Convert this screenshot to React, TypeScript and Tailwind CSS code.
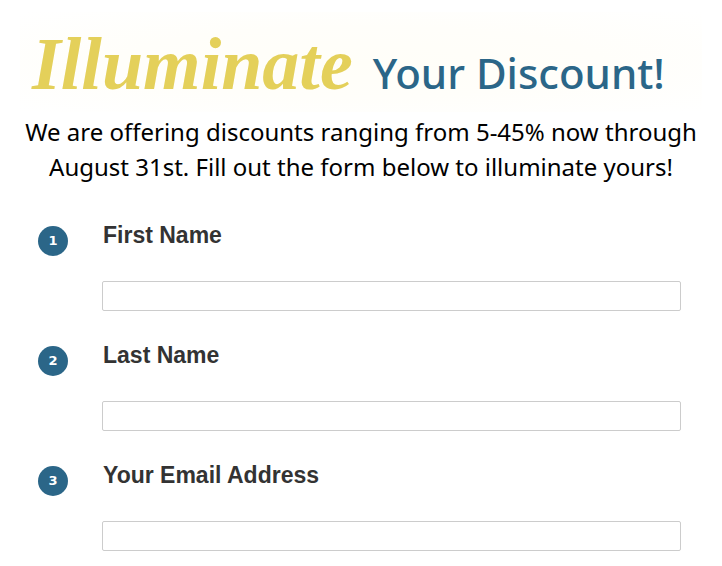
const questions = [
  { id: 'first-name', label: 'First Name', type: 'text' },
  { id: 'last-name', label: 'Last Name', type: 'text' },
  { id: 'email', label: 'Your Email Address', type: 'email' },
]

function Header() {
  return (
    <header className="px-5 pt-3">
      <h1 className="flex h-[100px] items-baseline gap-5 whitespace-nowrap bg-[radial-gradient(ellipse_at_center,#fffef8_0%,#fffefa_50%,#ffffff_100%)] pl-3">
        <span className="font-['Liberation_Serif',cursive] text-[74px] leading-[104px] font-bold italic text-[#e4d05a]">
          Illuminate
        </span>
        <span className="font-['Noto_Sans',sans-serif] text-[42px] font-medium text-[#2b6688]">
          Your Discount!
        </span>
      </h1>
      <p className="mt-0.5 text-center font-['Noto_Sans',sans-serif] text-2xl leading-[35px] text-black">
        We are offering discounts ranging from 5-45% now through August 31st. Fill out the form below to illuminate yours!
      </p>
    </header>
  )
}

export default function App() {
  return (
    <main className="bg-white">
      <Header />
      <form className="mt-9 flex flex-col gap-[29px] pr-[41px] pb-3 pl-[38px]">
        {questions.map((question, index) => (
          <div key={question.id} className="flex items-start gap-[34px]">
            <span className="mt-[6px] flex size-[30px] shrink-0 items-center justify-center rounded-full bg-[#2b6688] font-['DejaVu_Sans',sans-serif] text-[13px] font-bold text-white">
              {index + 1}
            </span>
            <div className="min-w-0 flex-1">
              <label
                htmlFor={question.id}
                className="block pl-px font-['Liberation_Sans',sans-serif] text-[23px] leading-[30px] font-bold text-[#333333]"
              >
                {question.label}
              </label>
              <input
                id={question.id}
                name={question.id}
                type={question.type}
                className="mt-[31px] block h-[30px] w-full rounded-xs border border-[#cccccc] bg-white px-2 font-['Liberation_Sans',sans-serif] text-base text-[#333333]"
              />
            </div>
          </div>
        ))}
      </form>
    </main>
  )
}
